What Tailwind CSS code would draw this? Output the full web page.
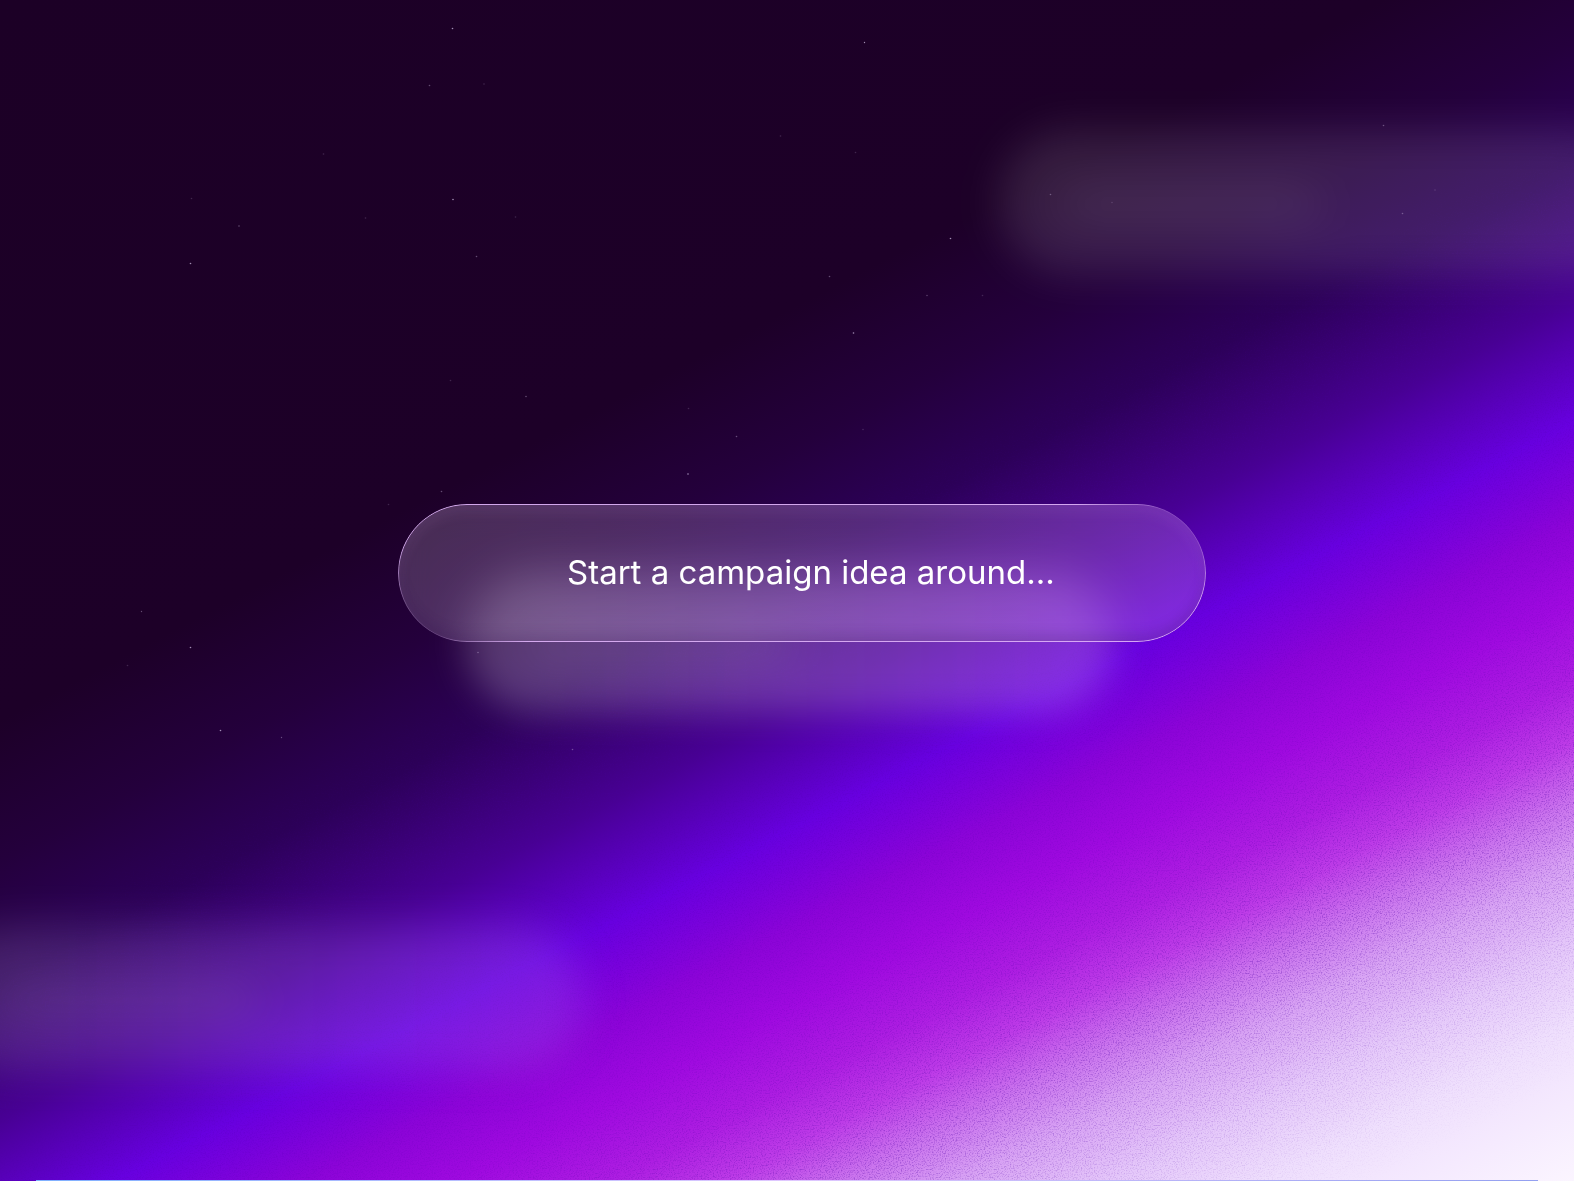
<!DOCTYPE html>
<html lang="en">
<head>
  <meta charset="UTF-8">
  <title>Campaign Ideas</title>
  <meta name="viewport" content="width=device-width, initial-scale=1.0">
  <!-- Tailwind CSS CDN -->
  <script src="https://cdn.jsdelivr.net/npm/@tailwindcss/browser@4"></script>
</head>
<body class="relative min-h-screen overflow-hidden flex items-center justify-center font-['Inter',sans-serif] bg-[linear-gradient(152.5deg,#1c0026_0%,#1d0028_36%,#24003c_43%,#2c0058_49%,#480094_56%,#6800e0_62%,#8c04d8_67%,#a00ae0_71%,#ae1ee2_75%,#be3ce8_78%,#cb74ee_81%,#d8a2f4_84%,#e5c8fa_88%,#efdffd_92%,#fbf5ff_100%)]">
  <!-- Grain -->
  <svg class="absolute inset-0 w-full h-full opacity-35 [mask-image:linear-gradient(152.5deg,transparent_45%,#0008_58%,#0006_70%,black_81%,#0008_87%,transparent_95%)]" aria-hidden="true">
    <filter id="grain" x="0" y="0" width="100%" height="100%" color-interpolation-filters="sRGB">
      <feTurbulence type="fractalNoise" baseFrequency="0.75" numOctaves="3" />
      <feColorMatrix type="matrix" values="0 0 0 0 0.3  0 0 0 0 0  0 0 0 0 0.65  3 0 0 0 -1.4" />
    </filter>
    <rect width="100%" height="100%" filter="url(#grain)" />
  </svg>

  <!-- Blurred prompts in the background -->
  <div class="absolute left-[63.5%] top-[11%] w-[648px] h-[144px] rounded-full bg-white/11 blur-[20px]">
    <div class="w-[260px] h-5 ml-[60px] mt-[64px] rounded-full bg-white/12 blur-[12px]"></div>
  </div>
  <div class="absolute left-[29.6%] top-[48.4%] w-[648px] h-[140px] rounded-full bg-linear-to-r from-white/22 to-[#c080f0]/35 blur-[18px]">
    <div class="w-[260px] h-5 ml-[60px] mt-[64px] rounded-full bg-white/12 blur-[12px]"></div>
  </div>
  <div class="absolute -left-[64px] top-[78.4%] w-[648px] h-[144px] rounded-full bg-linear-to-r from-white/12 to-[#b070f0]/22 blur-[20px]">
    <div class="w-[260px] h-5 ml-[60px] mt-[64px] rounded-full bg-white/12 blur-[12px]"></div>
  </div>

  <!-- Stars -->
  <svg class="absolute inset-0 w-full h-full" viewBox="0 0 1574 1181" preserveAspectRatio="xMidYMid slice" fill="#cdbbe0" aria-hidden="true">
    <g opacity="0.75">
      <circle cx="452.5" cy="28.5" r="0.8" /><circle cx="453" cy="199.5" r="0.8" /><circle cx="190.5" cy="263.5" r="0.8" />
      <circle cx="190.5" cy="647.5" r="0.8" /><circle cx="950.5" cy="238.5" r="0.8" /><circle cx="853.5" cy="333" r="0.8" />
      <circle cx="688" cy="474" r="0.8" /><circle cx="220.5" cy="730.5" r="0.8" /><circle cx="864.5" cy="42.5" r="0.7" />
    </g>
    <g opacity="0.4">
      <circle cx="429.5" cy="85.5" r="0.8" /><circle cx="476.5" cy="256.5" r="0.8" /><circle cx="239" cy="226" r="0.8" />
      <circle cx="829.5" cy="276.5" r="0.8" /><circle cx="736.5" cy="436.5" r="0.8" /><circle cx="441.5" cy="491.5" r="0.8" />
      <circle cx="1050.5" cy="194.5" r="0.8" /><circle cx="1402.5" cy="213.5" r="0.8" /><circle cx="1383.5" cy="125.5" r="0.8" />
      <circle cx="572.5" cy="749.5" r="0.8" /><circle cx="526" cy="396.5" r="0.8" /><circle cx="478" cy="652.5" r="0.8" />
      <circle cx="281.5" cy="737.5" r="0.7" /><circle cx="141.5" cy="611.5" r="0.7" /><circle cx="927" cy="295.5" r="0.7" />
    </g>
    <g opacity="0.2">
      <circle cx="484" cy="84" r="0.8" /><circle cx="191.5" cy="198.5" r="0.8" /><circle cx="365.5" cy="218" r="0.8" />
      <circle cx="515.5" cy="217" r="0.8" /><circle cx="450.5" cy="380.5" r="0.8" /><circle cx="323.5" cy="154" r="0.8" />
      <circle cx="855.5" cy="152.5" r="0.8" /><circle cx="780.5" cy="136" r="0.8" /><circle cx="982.5" cy="295.5" r="0.8" />
      <circle cx="1112" cy="202.5" r="0.8" /><circle cx="1435" cy="190" r="0.8" /><circle cx="388.5" cy="504.5" r="0.8" />
      <circle cx="688.5" cy="408.5" r="0.8" /><circle cx="863" cy="429.5" r="0.8" /><circle cx="127.5" cy="665.5" r="0.8" />
    </g>
  </svg>

  <form class="relative w-full max-w-[808px] ml-[30px] mb-[35px]">
    <input type="text" id="prompt" name="prompt" aria-label="Campaign idea" placeholder="Start a campaign idea around..."
      class="block w-full h-[138px] pl-[169px] pr-8 pb-[2px] rounded-full bg-linear-to-r from-[#f4e0ff]/20 to-[#e0a8f8]/24 backdrop-blur-lg shadow-[inset_0_8px_14px_#e8b0ff16,inset_0_-8px_12px_#30104a30] text-[33px] text-white placeholder:text-white focus:outline-none" />
    <!-- Rim light, faded at the bottom-left and top-right -->
    <div class="absolute inset-0 rounded-full border border-[#e0b4fa]/90 pointer-events-none [mask-image:conic-gradient(black_76deg,#0003_80deg,#0004_86deg,black_94deg,black_256deg,#0003_260deg,#0004_266deg,black_274deg)]"></div>
  </form>

  <div class="absolute bottom-0 inset-x-9 h-px bg-linear-to-r from-[#7fb0ff] via-[#e0c8ff] to-[#93a0f0]"></div>
</body>
</html>
